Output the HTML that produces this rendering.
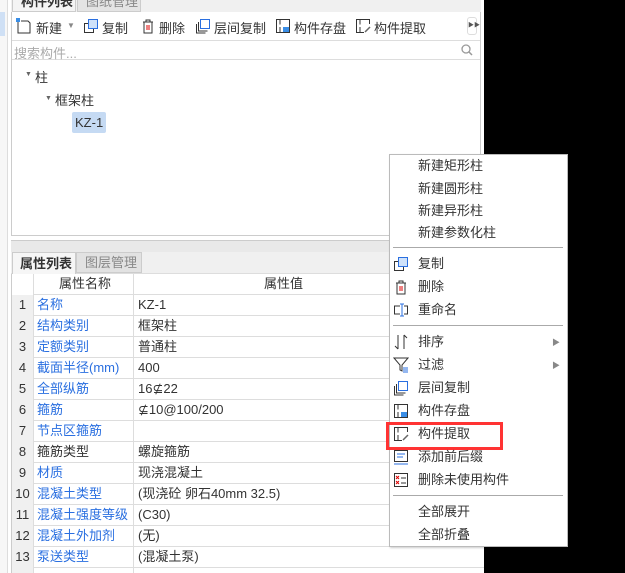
<!DOCTYPE html>
<html style="overflow:hidden"><head><meta charset="utf-8"><style>
*{margin:0;padding:0;box-sizing:border-box}
html,body{width:625px;height:573px;overflow:hidden}
body{background:#fff;font-family:"Liberation Sans","Noto Sans CJK SC",sans-serif;font-size:13px;color:#333;position:relative}
.a{position:absolute}
.blue{color:#2a6fe0}
.row{position:absolute;left:12px;width:472px;height:21px;border-bottom:1px solid #ddd}
.row div{position:absolute;top:0;height:21px;line-height:20px;white-space:nowrap}
.row .i{left:0;width:22px;text-align:center;background:#f0f0f0;border-right:1px solid #ddd}
.row .n{left:22px;width:100px;padding-left:3px;border-right:1px solid #ddd}
.row .v{left:122px;padding-left:4px}
.mi{position:absolute;left:418px;font-size:13px;color:#333;line-height:16px}
.sep{position:absolute;left:393px;width:170px;height:1px;background:#aaa}
.ic{position:absolute;left:393px}
</style></head><body>
<div class="a" style="left:484px;top:0;width:141px;height:573px;background:#000"></div>
<div class="a" style="left:0;top:0;width:8px;height:573px;background:#f7f7f7;border-right:1px solid #ddd"></div>
<div class="a" style="left:0;top:12px;width:5px;height:24px;background:#cfe0f5"></div>
<div class="a" style="left:11px;top:0;width:470px;height:12px;background:#f0f0f0"></div>
<div class="a" style="left:12px;top:-8px;width:64px;height:20px;background:#f4f4f4;border:1px solid #ccc;font-weight:bold;padding-left:8px;line-height:18px">构件列表</div>
<div class="a" style="left:77px;top:-8px;width:64px;height:20px;background:#e4e4e4;border:1px solid #ccc;color:#888;padding-left:8px;line-height:18px">图纸管理</div>
<div class="a" style="left:11px;top:12px;width:470px;height:224px;border:1px solid #ccc;border-top:none;background:#fff"></div>
<div class="a" style="left:12px;top:40px;width:468px;height:1px;background:#ddd"></div>
<div class="a" style="left:12px;top:59px;width:468px;height:1px;background:#ddd"></div>
<div class="a" style="top:18px;left:16px;width:450px;height:18px;white-space:nowrap">
<svg class="a" style="left:0;top:0" width="16" height="16"><path d="M2 3v12h12V5l-2-2H5" fill="none" stroke="#333"/><rect x="0" y="0" width="4" height="4" fill="#3a8ee6"/></svg>
<span class="a" style="left:20px;top:0">新建</span><span class="a" style="left:51px;top:3px;color:#888;font-size:8px">▼</span>
<svg class="a" style="left:67px;top:0" width="16" height="16"><rect x="1.5" y="5.5" width="9" height="9" fill="#fff" stroke="#333"/><rect x="5.5" y="1.5" width="9" height="9" fill="#cfe2fa" stroke="#2a6fe0"/></svg>
<span class="a" style="left:86px;top:0">复制</span>
<svg class="a" style="left:124px;top:0" width="16" height="16"><path d="M3 4h10M6 4V2h4v2M4 4v11h8V4" fill="none" stroke="#333"/><path d="M7 7v5M9 7v5" stroke="#d00"/></svg>
<span class="a" style="left:143px;top:0">删除</span>
<svg class="a" style="left:179px;top:0" width="16" height="16"><path d="M1.5 6v9h9M3.5 4v9h9" fill="none" stroke="#333"/><rect x="5.5" y="1.5" width="9" height="9" fill="#fff" stroke="#2a6fe0"/></svg>
<span class="a" style="left:198px;top:0">层间复制</span>
<svg class="a" style="left:259px;top:0" width="16" height="16"><path d="M1.5 1.5h13v13h-13zM5 1.5v5M5 9v5.5" fill="none" stroke="#333"/><rect x="8" y="9" width="6" height="5" fill="#3a8ee6"/></svg>
<span class="a" style="left:278px;top:0">构件存盘</span>
<svg class="a" style="left:339px;top:0" width="16" height="16"><path d="M14.5 6V1.5h-13v13H9M5 1.5v5M5 9v5.5" fill="none" stroke="#333"/><path d="M10 14l5-5" stroke="#666" stroke-width="1.5"/></svg>
<span class="a" style="left:358px;top:0">构件提取</span>
</div>
<div class="a" style="left:467px;top:17px;width:10px;height:18px;border:1px solid #ddd;border-radius:3px;font-size:6px;color:#555;line-height:16px;text-align:center">▶▶</div>
<div class="a" style="left:14px;top:43px;color:#aaa">搜索构件...</div>
<svg class="a" style="left:461px;top:44px" width="12" height="12"><circle cx="5" cy="5" r="4" fill="none" stroke="#999" stroke-width="1.3"/><path d="M8 8l3 3" stroke="#999" stroke-width="1.5"/></svg>
<div class="a" style="left:25px;top:71px;font-size:7px;color:#666">▼</div>
<div class="a" style="left:35px;top:67px">柱</div>
<div class="a" style="left:45px;top:95px;font-size:7px;color:#666">▼</div>
<div class="a" style="left:55px;top:90px">框架柱</div>
<div class="a" style="left:72px;top:112px;width:34px;height:21px;background:#c5daf3;border-radius:2px;padding-left:3px;line-height:21px">KZ-1</div>
<div class="a" style="left:11px;top:240px;width:473px;height:12px;background:#e9e9e9;border-top:1px solid #ccc"></div>
<div class="a" style="left:11px;top:252px;width:473px;height:22px;background:#f0f0f0;border-bottom:1px solid #ddd"></div>
<div class="a" style="left:12px;top:252px;width:64px;height:22px;background:#f6f6f6;border:1px solid #ccc;border-bottom:none;padding-left:7px;line-height:21px;font-weight:bold">属性列表</div>
<div class="a" style="left:76px;top:252px;width:66px;height:21px;background:#e2e2e2;border:1px solid #ccc;color:#888;padding-left:8px;line-height:20px">图层管理</div>
<div class="a" style="left:11px;top:274px;width:1px;height:299px;background:#ccc"></div>
<div class="row" style="top:274px"><div class="i" style="background:#fff"></div><div class="n" style="text-align:center">属性名称</div><div class="v" style="left:248px">属性值</div></div>
<div class="row" style="top:295px"><div class="i">1</div><div class="n blue">名称</div><div class="v">KZ-1</div></div>
<div class="row" style="top:316px"><div class="i">2</div><div class="n blue">结构类别</div><div class="v">框架柱</div></div>
<div class="row" style="top:337px"><div class="i">3</div><div class="n blue">定额类别</div><div class="v">普通柱</div></div>
<div class="row" style="top:358px"><div class="i">4</div><div class="n blue">截面半径(mm)</div><div class="v">400</div></div>
<div class="row" style="top:379px"><div class="i">5</div><div class="n blue">全部纵筋</div><div class="v">16⊈22</div></div>
<div class="row" style="top:400px"><div class="i">6</div><div class="n blue">箍筋</div><div class="v">⊈10@100/200</div></div>
<div class="row" style="top:421px"><div class="i">7</div><div class="n blue">节点区箍筋</div><div class="v"></div></div>
<div class="row" style="top:442px"><div class="i">8</div><div class="n">箍筋类型</div><div class="v">螺旋箍筋</div></div>
<div class="row" style="top:463px"><div class="i">9</div><div class="n blue">材质</div><div class="v">现浇混凝土</div></div>
<div class="row" style="top:484px"><div class="i">10</div><div class="n blue">混凝土类型</div><div class="v">(现浇砼 卵石40mm 32.5)</div></div>
<div class="row" style="top:505px"><div class="i">11</div><div class="n blue">混凝土强度等级</div><div class="v">(C30)</div></div>
<div class="row" style="top:526px"><div class="i">12</div><div class="n blue">混凝土外加剂</div><div class="v">(无)</div></div>
<div class="row" style="top:547px"><div class="i">13</div><div class="n blue">泵送类型</div><div class="v">(混凝土泵)</div></div>
<div class="row" style="top:568px;height:5px;border:none"><div class="i" style="height:5px"></div><div class="n" style="height:5px"></div></div>
<div class="a" style="left:389px;top:154px;width:179px;height:393px;background:#fff;border:1px solid #bbb;box-shadow:1px 1px 2px rgba(0,0,0,.2)"></div>
<div class="mi" style="top:158px">新建矩形柱</div>
<div class="mi" style="top:181px">新建圆形柱</div>
<div class="mi" style="top:203px">新建异形柱</div>
<div class="mi" style="top:225px">新建参数化柱</div>
<div class="sep" style="top:247px"></div>
<svg class="ic" style="top:256px" width="16" height="16"><rect x="1.5" y="5.5" width="9" height="9" fill="#fff" stroke="#333"/><rect x="5.5" y="1.5" width="9" height="9" fill="#cfe2fa" stroke="#2a6fe0"/></svg>
<div class="mi" style="top:256px">复制</div>
<svg class="ic" style="top:279px" width="16" height="16"><path d="M3 4h10M6 4V2h4v2M4 4v11h8V4" fill="none" stroke="#333"/><path d="M7 7v5M9 7v5" stroke="#d00"/></svg>
<div class="mi" style="top:279px">删除</div>
<svg class="ic" style="top:302px" width="16" height="16"><path d="M7 4H1.5v8H7M11 4h3.5v8H11" fill="none" stroke="#333"/><path d="M9 2v12M7 2h4M7 14h4" stroke="#2a6fe0"/></svg>
<div class="mi" style="top:302px">重命名</div>
<div class="sep" style="top:325px"></div>
<svg class="ic" style="top:334px" width="16" height="16"><path d="M5 1v14M2 12l3 3M11 15V1M11 1l3 3" fill="none" stroke="#333"/></svg>
<div class="mi" style="top:334px">排序</div><div class="a" style="left:552px;top:337px;font-size:8px;color:#888">▶</div>
<svg class="ic" style="top:357px" width="16" height="16"><path d="M1 1h14L9 8v6L7 13V8z" fill="none" stroke="#333"/><path d="M10 11h5M10 13h5M10 15h5" stroke="#2a6fe0"/></svg>
<div class="mi" style="top:357px">过滤</div><div class="a" style="left:552px;top:360px;font-size:8px;color:#888">▶</div>
<svg class="ic" style="top:380px" width="16" height="16"><path d="M1.5 6v9h9M3.5 4v9h9" fill="none" stroke="#333"/><rect x="5.5" y="1.5" width="9" height="9" fill="#fff" stroke="#2a6fe0"/></svg>
<div class="mi" style="top:380px">层间复制</div>
<svg class="ic" style="top:403px" width="16" height="16"><path d="M1.5 1.5h13v13h-13zM5 1.5v5M5 9v5.5" fill="none" stroke="#333"/><rect x="8" y="9" width="6" height="5" fill="#3a8ee6"/></svg>
<div class="mi" style="top:403px">构件存盘</div>
<svg class="ic" style="top:426px" width="16" height="16"><path d="M14.5 6V1.5h-13v13H9M5 1.5v5M5 9v5.5" fill="none" stroke="#333"/><path d="M10 14l5-5" stroke="#666" stroke-width="1.5"/></svg>
<div class="mi" style="top:426px">构件提取</div>
<div class="a" style="left:386px;top:422px;width:117px;height:28px;border:3px solid #f33"></div>
<svg class="ic" style="top:449px" width="16" height="16"><rect x="1.5" y="1.5" width="13" height="11" fill="none" stroke="#333"/><path d="M4 5h8M4 8h6M1 15h14" stroke="#2a6fe0"/></svg>
<div class="mi" style="top:449px">添加前后缀</div>
<svg class="ic" style="top:472px" width="16" height="16"><rect x="1.5" y="1.5" width="13" height="13" fill="none" stroke="#333"/><path d="M3 4l3 3M6 4l-3 3M3 9l3 3M6 9l-3 3" stroke="#d00"/><path d="M8 6h5M8 11h5" stroke="#333"/></svg>
<div class="mi" style="top:472px">删除未使用构件</div>
<div class="sep" style="top:495px"></div>
<div class="mi" style="top:504px">全部展开</div>
<div class="mi" style="top:527px">全部折叠</div>
</body></html>
